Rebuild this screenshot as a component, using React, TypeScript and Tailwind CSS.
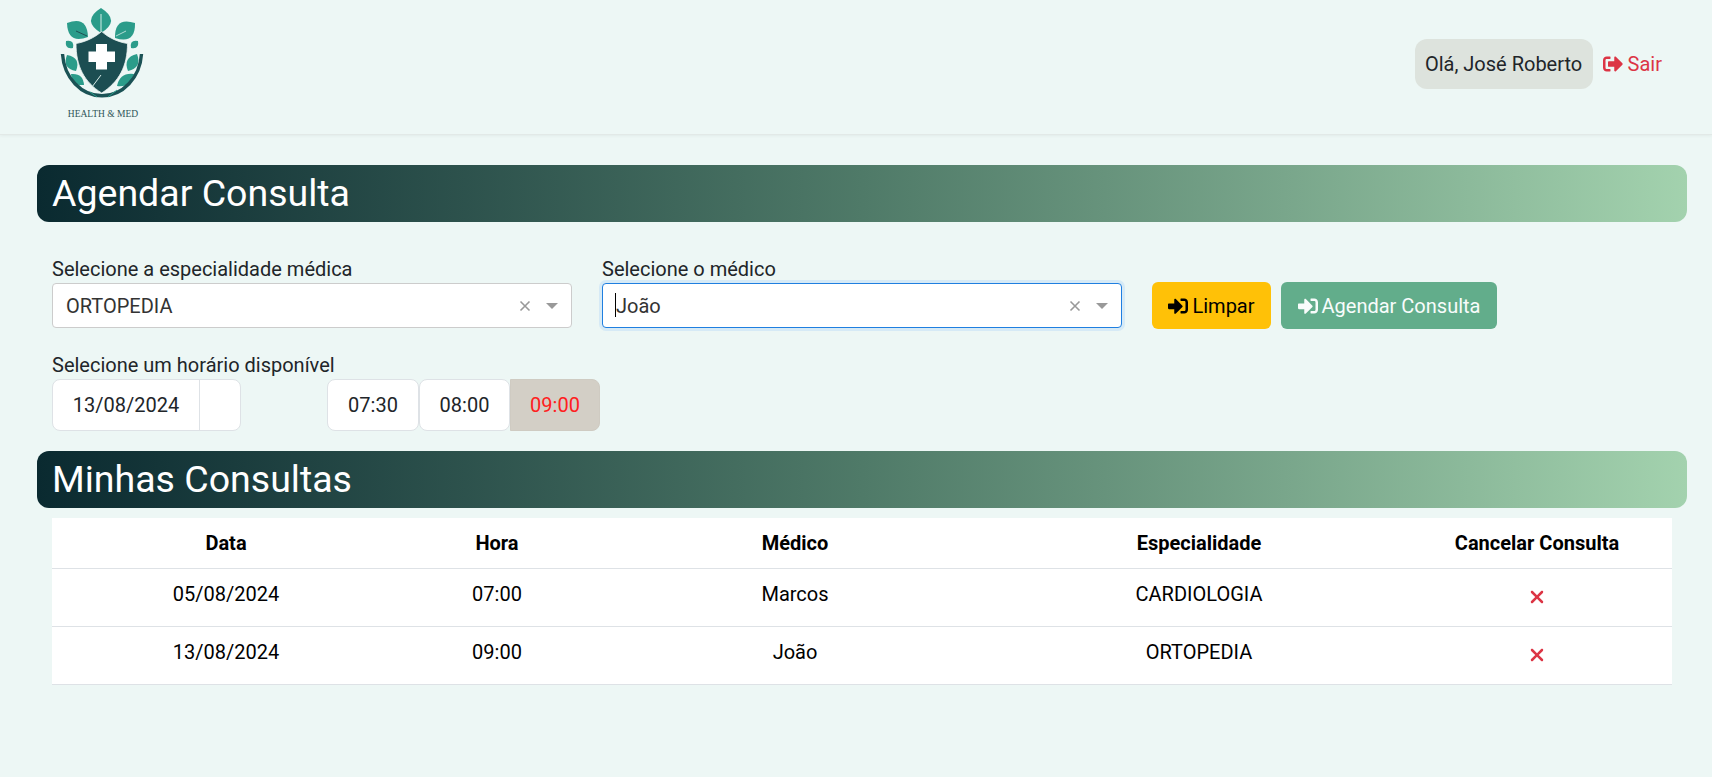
import { FaSignInAlt, FaSignOutAlt } from "react-icons/fa";
import { FaXmark } from "react-icons/fa6";

const leaves = [
  [71, 8, 71, 33, 12.5],
  [37, 23, 58, 37, 11],
  [105, 23, 85, 38, 11],
  [36, 41, 43, 48, 4.5],
  [108, 41, 101, 48, 4.5],
  [37, 55, 46, 71, 7],
  [107, 54, 98, 71, 7],
  [41, 74, 54, 85, 5.5],
  [104, 74, 87, 86, 6],
];

function leafPath([x1, y1, x2, y2, w]: number[]) {
  const mx = (x1 + x2) / 2;
  const my = (y1 + y2) / 2;
  const len = Math.hypot(x2 - x1, y2 - y1);
  const nx = ((y2 - y1) / len) * w * 1.6;
  const ny = (-(x2 - x1) / len) * w * 1.6;
  return `M${x1} ${y1}Q${mx + nx} ${my + ny} ${x2} ${y2}Q${mx - nx} ${my - ny} ${x1} ${y1}Z`;
}

function Logo() {
  return (
    <svg viewBox="0 0 150 134" className="h-[134px] w-[150px] shrink-0">
      {leaves.map((l, i) => (
        <path key={i} d={leafPath(l)} fill="#2b9c8a" />
      ))}
      <path d="M71 14V32" stroke="#d4ece6" strokeWidth="1" />
      <path d="M46 31L57 36" stroke="#1d4f52" strokeWidth="1" />
      <path d="M96 31L86 36" stroke="#d4ece6" strokeWidth="0.8" />
      <path
        d="M32.5 54A39.6 45 0 0 0 111.5 54"
        fill="none"
        stroke="#1b5255"
        strokeWidth="3.4"
      />
      <path
        d="M71.7 31.5C64 38 55 42 46 43.5C46 66 54 82 71.7 93C89 82 97.5 66 97.5 43.5C88 42 79 38 71.7 31.5Z"
        fill="#1c4e52"
        stroke="#eef6f4"
        strokeWidth="0.8"
      />
      <path d="M66 44H77V51.5H85V62H77V69.5H66V62H58.5V51.5H66Z" fill="#ffffff" />
      <path d="M62 87L71 75" stroke="#d9ece8" strokeWidth="1" />
      <path d="M60 92L67 97M78 97L87 90" stroke="#2b9c8a" strokeWidth="1" fill="none" />
      <text
        x="73"
        y="117"
        textAnchor="middle"
        fontFamily="Liberation Serif, serif"
        fontSize="9.5"
        fill="#2d5558"
      >
        HEALTH &amp; MED
      </text>
    </svg>
  );
}

function SelectBox({ value, focused }: { value: string; focused?: boolean }) {
  return (
    <div
      className={`flex h-[45px] w-[520px] items-center rounded-[4px] border bg-white pr-[9px] ${
        focused
          ? "border-[#1f7fe0] shadow-[0_0_0_3px_#d6eaf6]"
          : "border-[#cccccc]"
      }`}
    >
      <span className="relative flex-1 pl-[13px] text-[20px] text-[#333333]">
        {focused && <span className="absolute left-[12px] top-[2px] h-[24px] w-[1px] bg-black" />}
        {value}
      </span>
      <svg viewBox="0 0 12 12" className="mr-[15px] h-[12px] w-[12px]">
        <path d="M1.5 1.5L10.5 10.5M10.5 1.5L1.5 10.5" stroke="#999999" strokeWidth="1.6" />
      </svg>
      <span className="mr-[4px] h-0 w-0 border-x-[6px] border-t-[6px] border-x-transparent border-t-[#999999]" />
    </div>
  );
}

function SectionBar({ title }: { title: string }) {
  return (
    <div className="flex h-[57px] items-center rounded-[12px] bg-gradient-to-r from-[#0a2a30] via-[#4f7a68] to-[#a3d2ae] pl-[15px]">
      <h2 className="text-[37.5px] leading-none text-white">{title}</h2>
    </div>
  );
}

const rows = [
  { data: "05/08/2024", hora: "07:00", medico: "Marcos", esp: "CARDIOLOGIA" },
  { data: "13/08/2024", hora: "09:00", medico: "João", esp: "ORTOPEDIA" },
];

export default function App() {
  return (
    <div
      className="min-h-[777px] bg-[#edf7f5] text-[#212529]"
      style={{ fontFamily: "Roboto, sans-serif" }}
    >
      <header className="flex h-[135px] items-center justify-between border-b border-[#e2e9e7] pl-[30px] pr-[50px] shadow-[0_1px_3px_rgba(0,0,0,0.05)]">
        <Logo />
        <div className="flex items-center gap-[10px] pb-[7px]">
          <div className="flex h-[50px] w-[178px] items-center justify-center rounded-[12px] bg-[#dde3dd] text-[20px]">
            Olá, José Roberto
          </div>
          <a className="flex items-center gap-[5px] text-[20px] text-[#dc3545]">
            <FaSignOutAlt className="h-[20px] w-[20px]" />
            Sair
          </a>
        </div>
      </header>

      <main className="pl-[37px] pr-[25px] pt-[30px]">
        <SectionBar title="Agendar Consulta" />

        <div className="ml-[15px] mt-[34px] flex items-end">
          <div>
            <label className="block text-[20px] leading-[27px]">Selecione a especialidade médica</label>
            <SelectBox value="ORTOPEDIA" />
          </div>
          <div className="ml-[30px]">
            <label className="block text-[20px] leading-[27px]">Selecione o médico</label>
            <SelectBox value="João" focused />
          </div>
          <button className="-mb-[1px] ml-[30px] flex h-[47px] w-[119px] items-center justify-center gap-[4px] rounded-[6px] bg-[#ffc107] text-[20px] text-black">
            <FaSignInAlt className="h-[20px] w-[20px]" />
            Limpar
          </button>
          <button className="-mb-[1px] ml-[10px] flex h-[47px] w-[216px] items-center justify-center gap-[4px] rounded-[6px] bg-[#198754] text-[20px] text-white opacity-65">
            <FaSignInAlt className="h-[20px] w-[20px]" />
            Agendar Consulta
          </button>
        </div>

        <div className="ml-[15px] mt-[24px]">
          <label className="block text-[20px] leading-[27px]">Selecione um horário disponível</label>
          <div className="flex h-[52px] items-stretch text-[20px]">
            <div className="flex w-[189px] rounded-[8px] border border-[#dee2e6] bg-white">
              <div className="flex w-[147px] items-center justify-center border-r border-[#dee2e6]">13/08/2024</div>
            </div>
            <div className="ml-[86px] flex w-[92px] items-center justify-center rounded-[8px] border border-[#dee2e6] bg-white">
              07:30
            </div>
            <div className="flex w-[91px] items-center justify-center rounded-[8px] border border-[#dee2e6] bg-white">
              08:00
            </div>
            <div className="flex w-[90px] items-center justify-center rounded-r-[8px] border border-[#cfcbc2] bg-[#d3cfc6] text-[#ff2020]">
              09:00
            </div>
          </div>
        </div>

        <div className="mt-[20px]">
          <SectionBar title="Minhas Consultas" />
        </div>

        <table className="ml-[15px] mt-[10px] w-[1620px] table-fixed bg-white text-center text-[20px] text-black">
          <colgroup>
            <col className="w-[348px]" />
            <col className="w-[194px]" />
            <col className="w-[402px]" />
            <col className="w-[406px]" />
            <col className="w-[270px]" />
          </colgroup>
          <thead>
            <tr className="h-[50px] border-b border-[#dee2e6]">
              <th className="font-bold">Data</th>
              <th className="font-bold">Hora</th>
              <th className="font-bold">Médico</th>
              <th className="font-bold">Especialidade</th>
              <th className="font-bold">Cancelar Consulta</th>
            </tr>
          </thead>
          <tbody>
            {rows.map((r) => (
              <tr key={r.data} className="h-[58px] border-b border-[#dee2e6]">
                <td className="pb-[6px]">{r.data}</td>
                <td className="pb-[6px]">{r.hora}</td>
                <td className="pb-[6px]">{r.medico}</td>
                <td className="pb-[6px]">{r.esp}</td>
                <td>
                  <FaXmark className="mx-auto h-[20px] w-[20px] text-[#dc3545]" />
                </td>
              </tr>
            ))}
          </tbody>
        </table>
      </main>
    </div>
  );
}
